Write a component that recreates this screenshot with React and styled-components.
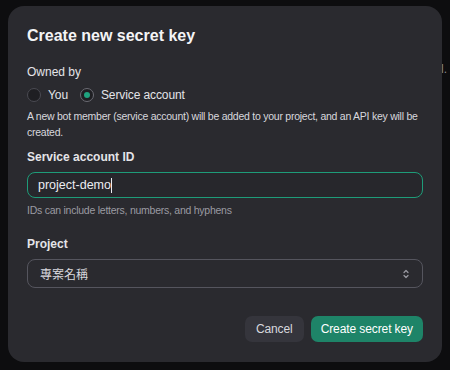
import React from 'react';
import styled, { createGlobalStyle } from 'styled-components';

const GlobalStyle = createGlobalStyle`
  html, body {
    margin: 0;
    padding: 0;
    background: #0d0d0f;
    font-family: "Liberation Sans", Arial, sans-serif;
  }
`;

const Page = styled.div`
  position: relative;
  width: 450px;
  height: 370px;
  padding: 6px 8px 0;
  box-sizing: border-box;
  overflow: hidden;
`;

const BehindText = styled.span`
  position: absolute;
  left: 441px;
  top: 62px;
  font-size: 12px;
  color: #8a8a90;
`;

const Modal = styled.div`
  position: relative;
  width: 434px;
  height: 356px;
  box-sizing: border-box;
  background: #2a2a2f;
  border-radius: 16px;
  padding: 18px 19px 20px;
  display: flex;
  flex-direction: column;
  color: #ececf1;
`;

const Title = styled.h2`
  margin: 0;
  font-size: 16px;
  line-height: 24px;
  font-weight: 700;
  color: #f4f4f6;
`;

const Label = styled.div`
  margin-top: ${(p) => p.$top}px;
  font-size: 12px;
  line-height: 18px;
  font-weight: ${(p) => (p.$bold ? 700 : 400)};
  color: #e4e4e8;
`;

const RadioRow = styled.div`
  margin-top: 5px;
  display: flex;
  align-items: center;
  gap: 12px;
  height: 18px;
`;

const RadioOption = styled.label`
  display: flex;
  align-items: center;
  gap: 7px;
  font-size: 12px;
  letter-spacing: -0.1px;
  color: #e4e4e8;
`;

const RadioCircle = styled.span`
  width: 12px;
  height: 12px;
  border-radius: 50%;
  border: 1px solid ${(p) => (p.$checked ? '#6b6b73' : '#4a4a52')};
  background: #1f1f23;
  display: flex;
  align-items: center;
  justify-content: center;
  &::after {
    content: '';
    width: 6px;
    height: 6px;
    border-radius: 50%;
    background: ${(p) => (p.$checked ? '#1fa37f' : 'transparent')};
  }
`;

const Help = styled.p`
  margin: ${(p) => p.$top}px 0 0;
  font-size: 10.5px;
  line-height: 16px;
  letter-spacing: -0.25px;
  color: ${(p) => (p.$muted ? '#9a9aa2' : '#d8d8de')};
`;

const Input = styled.div`
  margin-top: 6px;
  height: 26px;
  box-sizing: border-box;
  border: 1.5px solid #1e9c79;
  border-radius: 8px;
  background: #27272c;
  display: flex;
  align-items: center;
  padding-left: 10px;
  font-size: 12.5px;
  color: #ececf1;
`;

const Caret = styled.span`
  display: inline-block;
  width: 1px;
  height: 15px;
  background: #ececf1;
`;

const Select = styled.div`
  margin-top: 6px;
  height: 29px;
  box-sizing: border-box;
  border: 1px solid #55555e;
  border-radius: 8px;
  display: flex;
  align-items: center;
  justify-content: space-between;
  padding: 0 12px;
  font-size: 12px;
  font-family: "Liberation Sans", "Noto Sans CJK TC", sans-serif;
  color: #d8d8de;
`;

const Footer = styled.div`
  margin-top: auto;
  display: flex;
  justify-content: flex-end;
  gap: 7px;
`;

const Button = styled.button`
  height: 26px;
  border: none;
  border-radius: 7px;
  padding: 0 ${(p) => (p.$primary ? 10 : 11)}px;
  font-family: "Liberation Sans", Arial, sans-serif;
  font-size: 12px;
  letter-spacing: -0.1px;
  color: ${(p) => (p.$primary ? '#ffffff' : '#d8d8de')};
  background: ${(p) => (p.$primary ? '#1e8468' : '#35353c')};
`;

const Chevrons = () => (
  <svg width="8" height="10" viewBox="0 0 8 10" fill="none" stroke="#9a9aa2" strokeWidth="1.2" strokeLinecap="round" strokeLinejoin="round">
    <path d="M2 3.5 L4 1.5 L6 3.5" />
    <path d="M2 6.5 L4 8.5 L6 6.5" />
  </svg>
);

export default function App() {
  return (
    <>
      <GlobalStyle />
      <Page>
        <BehindText>l.</BehindText>
        <Modal>
          <Title>Create new secret key</Title>
          <Label $top={15}>Owned by</Label>
          <RadioRow>
            <RadioOption>
              <RadioCircle />
              You
            </RadioOption>
            <RadioOption>
              <RadioCircle $checked />
              Service account
            </RadioOption>
          </RadioRow>
          <Help $top={4}>
            A new bot member (service account) will be added to your project, and an API key will be created.
          </Help>
          <Label $top={8} $bold>Service account ID</Label>
          <Input>
            project-demo<Caret />
          </Input>
          <Help $top={4} $muted>IDs can include letters, numbers, and hyphens</Help>
          <Label $top={17} $bold>Project</Label>
          <Select>
            <span>專案名稱</span>
            <Chevrons />
          </Select>
          <Footer>
            <Button>Cancel</Button>
            <Button $primary>Create secret key</Button>
          </Footer>
        </Modal>
      </Page>
    </>
  );
}
